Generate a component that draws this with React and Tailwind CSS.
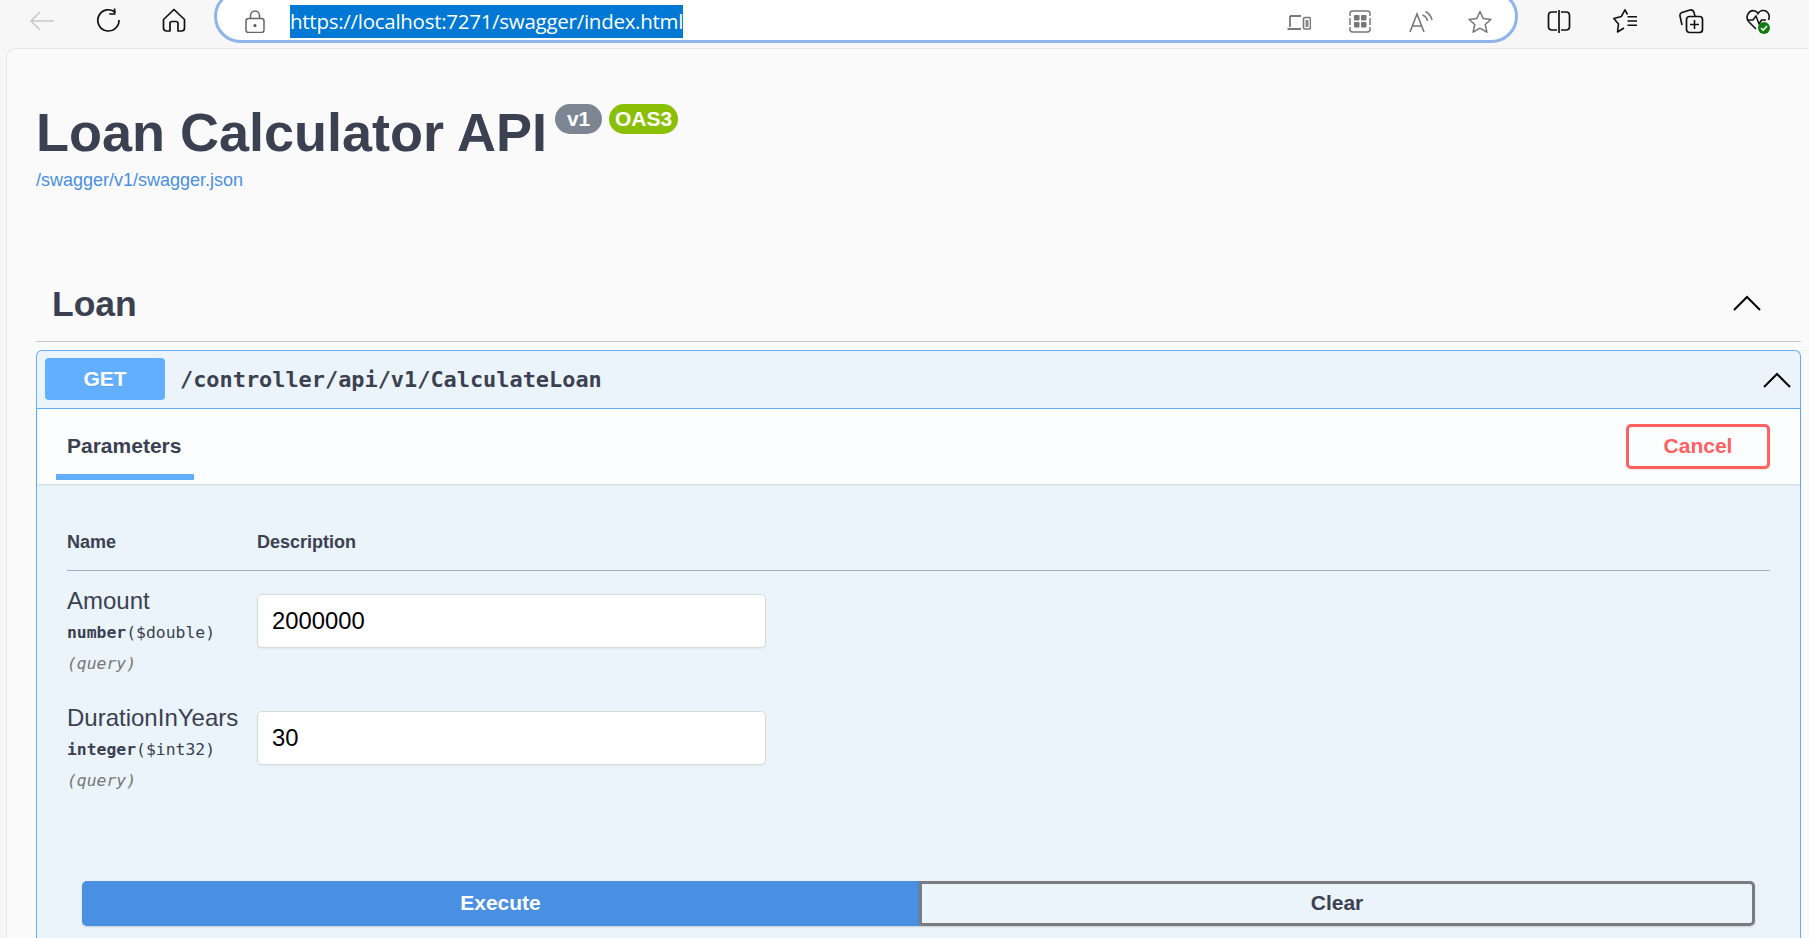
import React from 'react';

const Chevron = () => (
  <svg width="28" height="16" viewBox="0 0 28 16" fill="none" stroke="#000" strokeWidth="2">
    <path d="M1 15 L14 2 L27 15" />
  </svg>
);

const ToolIcon = ({ w = 24, h = 24, className = '', children }) => (
  <svg width={w} height={h} viewBox={`0 0 ${w} ${h}`} fill="none" className={`shrink-0 ${className}`}>
    {children}
  </svg>
);

const Toolbar = () => (
  <div className="flex h-[48px] items-start overflow-hidden bg-[#f7f7f7]">
    <div className="flex items-start pl-[29px] pt-[9px]">
      <ToolIcon w={26} h={22} className="mr-[40px] mt-[1px]">
        <path d="M25 11 H2 M11 2 L2 11 L11 20" stroke="#c9c9c9" strokeWidth="1.6" />
      </ToolIcon>
      <ToolIcon w={26} h={24} className="mr-[41px] -mt-[1px]">
        <path d="M20.5 4.5 A10.6 10.6 0 1 0 24 12" stroke="#111" strokeWidth="1.7" />
        <path d="M19.6 0.6 V6 H14.2" stroke="#111" strokeWidth="1.7" />
      </ToolIcon>
      <ToolIcon w={24} h={24} className="-mt-[1px]">
        <path
          d="M12 1.5 L22.5 11.5 V20 Q22.5 23 19.5 23 H16 V15.5 Q16 13.5 14 13.5 H10 Q8 13.5 8 15.5 V23 H4.5 Q1.5 23 1.5 20 V11.5 Z"
          stroke="#111"
          strokeWidth="1.7"
          strokeLinejoin="round"
        />
      </ToolIcon>
    </div>
    <div className="-mt-[10px] ml-[28px] flex h-[53px] w-[1304px] shrink-0 items-center rounded-full border-[3px] border-[#8fb4ea] bg-white pt-[10px]">
      <ToolIcon w={20} h={23} className="ml-[28px] mt-[-1px]">
        <rect x="1" y="8.5" width="18" height="14" rx="2.5" stroke="#666" strokeWidth="1.5" />
        <path d="M5.5 8.5 V5.5 A4.5 4.5 0 0 1 14.5 5.5 V8.5" stroke="#666" strokeWidth="1.5" />
        <circle cx="10" cy="15.5" r="1.5" fill="#555" />
      </ToolIcon>
      <span className="ml-[25px] bg-[#0078d4] font-['Open_Sans',sans-serif] text-[20.5px] leading-[33px] tracking-[-0.27px] text-white">
        https://localhost:7271/swagger/index.html
      </span>
      <div className="ml-auto flex items-center pr-[23px]">
        <ToolIcon w={24} h={17} className="mr-[38px] mt-[2px]">
          <path d="M3 2 H14 M3 2 V13 M0.5 15 H14" stroke="#777" strokeWidth="1.8" />
          <rect x="16.5" y="3.5" width="7" height="11.5" rx="1.5" stroke="#777" strokeWidth="1.6" />
          <rect x="18.5" y="6" width="3" height="7" fill="#888" />
        </ToolIcon>
        <ToolIcon w={22} h={23} className="mr-[38px]">
          <path d="M1 6 V3.5 Q1 1 3.5 1 H18.5 Q21 1 21 3.5 V6 M1 17 V19.5 Q1 22 3.5 22 H18.5 Q21 22 21 19.5 V17" stroke="#777" strokeWidth="1.5" />
          <path d="M1 8 V15 M21 8 V15" stroke="#777" strokeWidth="1.5" />
          <rect x="5" y="5" width="5.5" height="5.5" rx="1" fill="#777" />
          <rect x="12" y="5" width="5.5" height="5.5" rx="1" fill="#777" />
          <rect x="5" y="12" width="5.5" height="5.5" rx="1" fill="#777" />
          <rect x="12" y="12" width="5.5" height="5.5" rx="1" fill="#777" />
        </ToolIcon>
        <ToolIcon w={24} h={23} className="mr-[35px]">
          <path d="M1 22 L8 4 L15 22 M3.5 16 H12.5" stroke="#777" strokeWidth="1.6" />
          <path d="M13.5 5 Q17.5 6.5 18.5 11 M16.5 1.5 Q21.5 4 23 10" stroke="#777" strokeWidth="1.6" />
        </ToolIcon>
        <ToolIcon w={24} h={24}>
          <path
            d="M12 1.5 L15.2 8.6 L23 9.4 L17.2 14.5 L18.9 22.2 L12 18.2 L5.1 22.2 L6.8 14.5 L1 9.4 L8.8 8.6 Z"
            stroke="#777"
            strokeWidth="1.5"
            strokeLinejoin="round"
          />
        </ToolIcon>
      </div>
    </div>
    <div className="flex items-start pl-[29px] pt-[9px]">
      <ToolIcon w={24} h={24} className="mr-[42px] mt-[1px]">
        <path d="M10 2 H5 Q1.5 2 1.5 5.5 V16.5 Q1.5 20 5 20 H10 M14 2 H19 Q22.5 2 22.5 5.5 V16.5 Q22.5 20 19 20 H14" stroke="#111" strokeWidth="1.7" />
        <path d="M12 0 V23" stroke="#111" strokeWidth="1.7" />
      </ToolIcon>
      <ToolIcon w={24} h={24} className="mr-[42px]">
        <path
          d="M14.5 5.5 L12 0.8 L8.3 7.5 L0.8 9.5 L5.5 15 L4.5 23 L11 19"
          stroke="#111"
          strokeWidth="1.6"
          strokeLinejoin="round"
        />
        <path d="M14.5 7.7 H24 M14.5 12 H24 M14.5 16.3 H24" stroke="#111" strokeWidth="1.6" />
      </ToolIcon>
      <ToolIcon w={25} h={25} className="mr-[42px]">
        <path d="M3 16 L1 7 Q0.5 4.5 3 3.5 L11 1 Q14 0.5 15 3.5 L16 7" stroke="#111" strokeWidth="1.6" />
        <rect x="7.5" y="7.5" width="16" height="16" rx="3" stroke="#111" strokeWidth="1.7" />
        <path d="M15.5 11 V20 M11 15.5 H20" stroke="#111" strokeWidth="1.6" />
      </ToolIcon>
      <ToolIcon w={25} h={26}>
        <path
          d="M10 20 L3 13 Q0 10 1.5 6 Q4 0.5 9 2 Q11 2.5 12 4.5 Q13.5 2 16 1.5 Q21.5 1 23 6 Q23.6 8.5 22.5 11"
          stroke="#111"
          strokeWidth="1.6"
        />
        <path d="M1 11 H7 L10 7 L13 15 L15.5 11 H20" stroke="#111" strokeWidth="1.5" />
        <circle cx="18" cy="19" r="6" fill="#107c10" />
        <path d="M15 19 L17.2 21.2 L21 17" stroke="#fff" strokeWidth="1.6" />
      </ToolIcon>
    </div>
  </div>
);

const ParamRow = ({ name, type, format, value }) => (
  <div className="flex items-start">
    <div className="w-[190px] shrink-0">
      <div className="mt-[1px] text-[24px] leading-[30px] text-[#3b4151]">{name}</div>
      <div className="mt-[5px] font-['DejaVu_Sans_Mono',monospace] text-[16.4px] leading-[24px] text-[#3b4151]">
        <span className="font-bold">{type}</span>
        <span>({format})</span>
      </div>
      <div className="mt-[7px] font-['DejaVu_Sans_Mono',monospace] text-[16.4px] italic leading-[24px] text-[#777]">
        (query)
      </div>
    </div>
    <div className="mt-[9px] flex h-[54px] w-[509px] items-center rounded-[5px] border-[1.5px] border-[#d9d9d9] bg-white pl-[14px] text-[23.8px] text-black shadow-[0_1px_2px_rgba(0,0,0,0.06)]">
      {value}
    </div>
  </div>
);

export default function App() {
  return (
    <div className="h-[938px] w-[1809px] overflow-hidden bg-[#f7f7f7] font-['Liberation_Sans',sans-serif]">
      <Toolbar />
      <div className="ml-[6px] h-[890px] rounded-tl-[10px] border-l border-t border-[#e8e8e8] bg-[#fafafa] pl-[29px] pr-[8px]">
        <div className="flex items-start pt-[53px]">
          <h1 className="text-[54px] font-bold leading-[60px] text-[#3b4151]">Loan Calculator API</h1>
          <span className="ml-[8px] mt-[2px] flex h-[30px] w-[47px] items-center justify-center rounded-[15px] bg-[#7d8492] text-[21px] font-bold text-white">
            v1
          </span>
          <span className="ml-[7px] mt-[2px] flex h-[30px] w-[69px] items-center justify-center rounded-[15px] bg-[#89bf04] text-[21px] font-bold text-white">
            OAS3
          </span>
        </div>
        <a className="mt-[7px] block text-[18px] leading-[22px] text-[#4990e2]">/swagger/v1/swagger.json</a>

        <div className="mt-[93px] flex items-center justify-between border-b border-[#c6c7cb] pb-[17px] pl-[16px] pr-[40px]">
          <span className="text-[35.5px] font-bold leading-[40px] text-[#3b4151]">Loan</span>
          <span className="mb-[3px]">
            <Chevron />
          </span>
        </div>

        <div className="mt-[8px] h-[600px] rounded-t-[6px] border-[1.5px] border-b-0 border-[#61affe] bg-[#ebf3fb]">
          <div className="flex h-[58px] items-center border-b-[1.5px] border-[#61affe] pl-[8px] pr-[9px]">
            <span className="mb-[2px] flex h-[42px] w-[120px] items-center justify-center rounded-[4px] bg-[#61affe] text-[21px] font-bold text-white [text-shadow:0_1px_0_rgba(0,0,0,0.1)]">
              GET
            </span>
            <span className="ml-[15px] mt-[2px] font-['DejaVu_Sans_Mono',monospace] text-[21.9px] font-bold text-[#3b4151]">
              /controller/api/v1/CalculateLoan
            </span>
            <span className="ml-auto">
              <Chevron />
            </span>
          </div>

          <div className="flex h-[75px] items-start justify-between bg-[#fcfdfe] pl-[19px] pr-[30px] shadow-[0_1px_2px_rgba(0,0,0,0.12)]">
            <div className="mt-[22px] h-[49px] w-[138px] border-b-[6px] border-[#61affe] pl-[11px] text-[21px] font-bold leading-[30px] text-[#3b4151]">
              Parameters
            </div>
            <button className="mt-[15px] h-[45px] w-[144px] rounded-[5px] border-[3px] border-[#ff6060] pb-[2px] text-[21px] font-bold text-[#ff6060] shadow-[0_1px_2px_rgba(0,0,0,0.1)]">
              Cancel
            </button>
          </div>

          <div className="px-[30px]">
            <div className="flex h-[87px] items-end border-b border-[#a5b0c5] pb-[16px] text-[18px] font-bold leading-[24px] text-[#3b4151]">
              <span className="w-[190px]">Name</span>
              <span>Description</span>
            </div>
            <div className="mt-[14px] flex flex-col gap-[26px]">
              <ParamRow name="Amount" type="number" format="$double" value="2000000" />
              <ParamRow name="DurationInYears" type="integer" format="$int32" value="30" />
            </div>
          </div>

          <div className="mt-[88px] flex pl-[45px] pr-[45px] text-[21px] font-bold">
            <button className="h-[45px] w-[837px] rounded-l-[5px] bg-[#4990e2] pb-[2px] text-white shadow-[0_1px_2px_rgba(0,0,0,0.15)]">
              Execute
            </button>
            <button className="h-[45px] flex-1 rounded-r-[5px] border-[3px] border-[#7a7c80] pb-[2px] text-[#3b4151] shadow-[0_1px_2px_rgba(0,0,0,0.15)]">
              Clear
            </button>
          </div>
        </div>
      </div>
    </div>
  );
}
